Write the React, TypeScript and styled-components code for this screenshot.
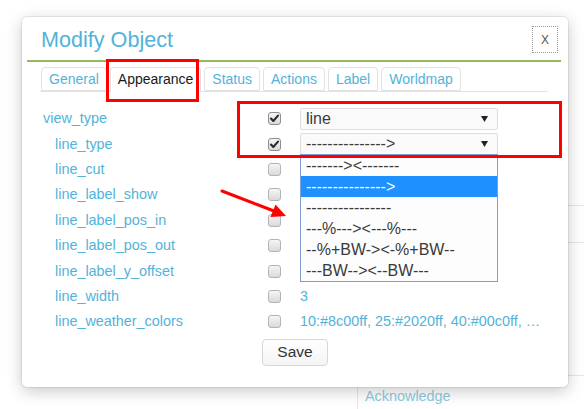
import React from 'react';
import styled, { createGlobalStyle } from 'styled-components';

const BLUE = '#52b3d9';

const TABS = ['General', 'Appearance', 'Status', 'Actions', 'Label', 'Worldmap'];

type Field = {
  name: string;
  indent?: boolean;
  checked?: boolean;
  kind?: 'select' | 'open-select' | 'text';
  value?: string;
};

const FIELDS: Field[] = [
  { name: 'view_type', checked: true, kind: 'select', value: 'line' },
  { name: 'line_type', indent: true, checked: true, kind: 'open-select', value: '--------------->' },
  { name: 'line_cut', indent: true },
  { name: 'line_label_show', indent: true },
  { name: 'line_label_pos_in', indent: true },
  { name: 'line_label_pos_out', indent: true },
  { name: 'line_label_y_offset', indent: true },
  { name: 'line_width', indent: true, kind: 'text', value: '3' },
  { name: 'line_weather_colors', indent: true, kind: 'text', value: '10:#8c00ff, 25:#2020ff, 40:#00c0ff, …' },
];

const LINE_TYPES = [
  '-------><-------',
  '--------------->',
  '----------------',
  '---%---><---%---',
  '--%+BW-><-%+BW--',
  '---BW--><--BW---',
];

const App = () => {
  return (
    <Page>
      <GlobalStyle />

      {/* the page behind the dialog */}
      <Backdrop>
        <BackdropRow $h={205} />
        <BackdropRow $h={36} />
        <BackdropRow $h={132} />
        <AckCell>Acknowledge</AckCell>
      </Backdrop>

      <Dialog>
        <Header>
          <Title>Modify Object</Title>
          <CloseButton>X</CloseButton>
        </Header>

        <TabBar>
          {TABS.map(tab => (
            <Tab key={tab} $active={tab === 'Appearance'}>
              {tab}
            </Tab>
          ))}
        </TabBar>

        <Form>
          {FIELDS.map(field => (
            <Row key={field.name}>
              <Label $indent={field.indent}>{field.name}</Label>
              <CheckBox $checked={field.checked}>
                {field.checked && (
                  <svg width="11" height="11" viewBox="0 0 11 11">
                    <path d="M2 5.6 L4.3 8 L9 2.6" fill="none" stroke="#2b2b2b" strokeWidth="2.1" strokeLinecap="round" strokeLinejoin="round" />
                  </svg>
                )}
              </CheckBox>
              {field.kind === 'text' && <Value>{field.value}</Value>}
              {(field.kind === 'select' || field.kind === 'open-select') && (
                <SelectBox>
                  <SelectText>{field.value}</SelectText>
                  <svg width="7" height="6" viewBox="0 0 7 6">
                    <polygon points="0,0 7,0 3.5,6" fill="#222" />
                  </svg>
                  {field.kind === 'open-select' && (
                    <DropList>
                      {LINE_TYPES.map(opt => (
                        <DropItem key={opt} $selected={opt === field.value}>
                          {opt}
                        </DropItem>
                      ))}
                    </DropList>
                  )}
                </SelectBox>
              )}
            </Row>
          ))}
        </Form>

        <Footer>
          <SaveButton>Save</SaveButton>
        </Footer>

        {/* red annotations drawn over the screenshot */}
        <RedBox $x={84} $y={42} $w={93} $h={43} />
        <RedBox $x={215} $y={84} $w={325} $h={57} />
        <ArrowSvg width="100" height="60" viewBox="0 0 100 60">
          <line x1="22" y1="11" x2="74" y2="31" stroke="#f00" strokeWidth="3" strokeLinecap="round" />
          <polygon points="86,36 70.5,37 75.5,24.5" fill="#f00" />
        </ArrowSvg>
      </Dialog>
    </Page>
  );
};

const GlobalStyle = createGlobalStyle`
  html, body {
    margin: 0;
    padding: 0;
    background: #fff;
  }
  body {
    font-family: "Liberation Sans", Arial, sans-serif;
  }
`;

const Page = styled.div`
  position: relative;
  width: 584px;
  height: 409px;
  overflow: hidden;
  background: #fff;
`;

const Backdrop = styled.div`
  margin-left: 357px;
  display: flex;
  flex-direction: column;
`;

const BackdropRow = styled.div<{ $h: number }>`
  height: ${p => p.$h}px;
  border-bottom: 1px solid #e6e6e6;
`;

const AckCell = styled.div`
  border-left: 1px solid #e6e6e6;
  padding: 12px 7px;
  height: 40px;
  font-size: 14.4px;
  line-height: 17px;
  color: #8ccbe2;
`;

const Dialog = styled.div`
  position: absolute;
  left: 22px;
  top: 17px;
  width: 546px;
  height: 370px;
  box-sizing: border-box;
  background: #fff;
  border-radius: 5px;
  box-shadow: 0 0 0 1px rgba(0, 0, 0, 0.07), 0 4px 16px rgba(0, 0, 0, 0.22);
  display: flex;
  flex-direction: column;
`;

const Header = styled.div`
  display: flex;
  justify-content: space-between;
  align-items: flex-start;
  margin: 0 7px 0 5px;
  padding: 9px 3px 0 14px;
  height: 34px;
  border-bottom: 2px solid #98b85c;
`;

const Title = styled.h1`
  margin: 1px 0 0;
  font-size: 21.6px;
  line-height: 26px;
  font-weight: normal;
  color: ${BLUE};
`;

const CloseButton = styled.button`
  width: 26px;
  height: 27px;
  box-sizing: border-box;
  padding: 0;
  border: 1px dotted #9a9a9a;
  background: transparent;
  font-family: inherit;
  font-size: 12px;
  color: #555;
  display: flex;
  align-items: center;
  justify-content: center;
`;

const TabBar = styled.div`
  display: flex;
  gap: 3px;
  margin: 5px 20px 0 18px;
  padding-left: 1px;
  border-bottom: 1px solid #e2e2e2;
`;

const Tab = styled.div<{ $active?: boolean }>`
  height: ${p => (p.$active ? 25 : 24)}px;
  margin-bottom: ${p => (p.$active ? -1 : 0)}px;
  box-sizing: border-box;
  padding: 0 7px;
  border: 1px solid #e2e2e2;
  border-bottom-color: ${p => (p.$active ? '#fff' : '#e2e2e2')};
  border-radius: 4px 4px 0 0;
  background: #fff;
  font-size: 14px;
  line-height: 22px;
  color: ${p => (p.$active ? '#1a1a1a' : BLUE)};
`;

const Form = styled.div`
  margin-top: 14px;
  padding-left: 21px;
  display: flex;
  flex-direction: column;
`;

const Row = styled.div`
  display: grid;
  grid-template-columns: 224px 33px 1fr;
  align-items: center;
  height: 25.4px;
`;

const Label = styled.span<{ $indent?: boolean }>`
  padding-left: ${p => (p.$indent ? 12 : 0)}px;
  font-size: 14.4px;
  line-height: 17px;
  color: ${BLUE};
`;

const CheckBox = styled.span<{ $checked?: boolean }>`
  width: 13px;
  height: 13px;
  margin-left: 1px;
  box-sizing: border-box;
  border: 1px solid ${p => (p.$checked ? '#8f8f8f' : '#b3b3b3')};
  border-radius: 3px;
  background: linear-gradient(#f5f5f5, #dadada);
  display: flex;
  align-items: center;
  justify-content: center;
`;

const Value = styled.span`
  font-size: 14.4px;
  line-height: 17px;
  color: ${BLUE};
  white-space: nowrap;
`;

const SelectBox = styled.div`
  position: relative;
  width: 198px;
  height: 22px;
  box-sizing: border-box;
  padding: 0 9px 0 5px;
  border: 1px solid #dedede;
  border-radius: 2px;
  background: #fafafa;
  display: flex;
  align-items: center;
  justify-content: space-between;
`;

const SelectText = styled.span`
  font-size: 16px;
  line-height: 20px;
  color: #3a3a3a;
`;

const DropList = styled.div`
  position: absolute;
  z-index: 5;
  top: 100%;
  left: -1px;
  width: 198px;
  box-sizing: border-box;
  border: 1px solid #7d9fd6;
  background: #fdfdfd;
  display: flex;
  flex-direction: column;
`;

const DropItem = styled.div<{ $selected?: boolean }>`
  height: 21px;
  padding-left: 5px;
  font-size: 16px;
  line-height: 21px;
  white-space: nowrap;
  color: ${p => (p.$selected ? '#fff' : '#3a3a3a')};
  background: ${p => (p.$selected ? '#1e90ff' : 'transparent')};
`;

const Footer = styled.div`
  display: flex;
  justify-content: center;
  margin-top: 4px;
`;

const SaveButton = styled.button`
  height: 27px;
  padding: 0 14px;
  border: 1px solid #d8d8d8;
  border-radius: 4px;
  background: linear-gradient(#fff, #f4f4f4);
  font-family: inherit;
  font-size: 15.5px;
  color: #333;
`;

const RedBox = styled.div<{ $x: number; $y: number; $w: number; $h: number }>`
  position: absolute;
  z-index: 10;
  left: ${p => p.$x}px;
  top: ${p => p.$y}px;
  width: ${p => p.$w}px;
  height: ${p => p.$h}px;
  box-sizing: border-box;
  border: 3px solid #f00;
  pointer-events: none;
`;

const ArrowSvg = styled.svg`
  position: absolute;
  z-index: 10;
  left: 178px;
  top: 163px;
  pointer-events: none;
`;

export default App;
